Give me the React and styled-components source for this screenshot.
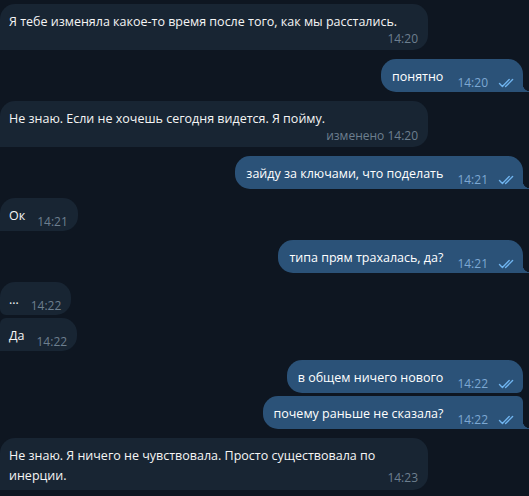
import React from 'react';
import styled, { createGlobalStyle, css } from 'styled-components';

const GlobalStyle = createGlobalStyle`
  html, body {
    margin: 0;
    padding: 0;
    background: #0e1621;
  }
  body {
    font-family: "Open Sans", "Noto Sans", sans-serif;
    -webkit-font-smoothing: antialiased;
  }
`;

const messages = [
  { id: 1, out: false, first: true, tail: true, layout: 'stacked', text: 'Я тебе изменяла какое-то время после того, как мы расстались.', time: '14:20' },
  { id: 2, out: true, first: true, tail: true, text: 'понятно', time: '14:20' },
  { id: 3, out: false, first: true, tail: true, layout: 'stacked', text: 'Не знаю. Если не хочешь сегодня видется. Я пойму.', time: '14:20', edited: true },
  { id: 4, out: true, first: true, tail: true, text: 'зайду за ключами, что поделать', time: '14:21' },
  { id: 5, out: false, first: true, tail: true, text: 'Ок', time: '14:21' },
  { id: 6, out: true, first: true, tail: true, text: 'типа прям трахалась, да?', time: '14:21' },
  { id: 7, out: false, first: true, tail: false, text: '…', time: '14:22' },
  { id: 8, out: false, first: false, tail: true, text: 'Да', time: '14:22' },
  { id: 9, out: true, first: true, tail: false, text: 'в общем ничего нового', time: '14:22' },
  { id: 10, out: true, first: false, tail: true, text: 'почему раньше не сказала?', time: '14:22' },
  { id: 11, out: false, first: true, tail: true, layout: 'tucked', text: 'Не знаю. Я ничего не чувствовала. Просто существовала по инерции.', time: '14:23' },
];

const Chat = styled.div`
  display: flex;
  flex-direction: column;
  width: 529px;
  height: 496px;
  overflow: hidden;
  box-sizing: border-box;
  padding-top: 4px;
  background: #0e1621;
`;

const Bubble = styled.div`
  position: relative;
  box-sizing: border-box;
  display: flex;
  flex-direction: ${p => (p.$layout === 'row' ? 'row' : 'column')};
  align-items: flex-start;
  margin-top: ${p => (p.$first ? '9px' : '3px')};
  padding: 8px 10px 1px 9px;
  border-radius: 15px;
  font-size: 12.5px;
  line-height: 20px;
  color: #f5f5f5;
  background: #182533;
  align-self: flex-start;

  &:first-child {
    margin-top: 0;
  }

  ${p => p.$layout === 'stacked' && css`
    width: 428px;
    padding-bottom: 3px;
  `}

  ${p => p.$layout === 'tucked' && css`
    display: flow-root;
    width: 428px;
    padding-bottom: 4px;
  `}

  ${p => !p.$out && css`
    ${!p.$first && 'border-top-left-radius: 6px;'}
    ${!p.$tail && 'border-bottom-left-radius: 6px;'}
    ${p.$tail && 'border-bottom-left-radius: 0;'}
  `}

  ${p => p.$out && css`
    align-self: flex-end;
    margin-right: 6px;
    padding-left: 11px;
    padding-right: 7px;
    color: #ffffff;
    background: #2b5278;
    ${!p.$first && 'border-top-right-radius: 6px;'}
    ${!p.$tail && 'border-bottom-right-radius: 6px;'}
    ${p.$tail && css`
      border-bottom-right-radius: 0;
      &::after {
        content: '';
        position: absolute;
        right: -7px;
        bottom: 0;
        width: 7px;
        height: 8px;
        background: radial-gradient(circle at 100% 0, transparent 7px, #2b5278 7.5px);
      }
    `}
  `}
`;

const Text = styled.span`
  white-space: pre-wrap;
  display: ${p => (p.$layout === 'tucked' ? 'inline' : 'block')};
`;

const Meta = styled.span`
  display: flex;
  align-items: center;
  flex-shrink: 0;
  font-size: 12px;
  line-height: 16px;
  white-space: nowrap;
  color: ${p => (p.$out ? '#7da8d3' : '#6d7f8f')};

  ${p => p.$layout === 'row' && css`
    margin-top: 8px;
    margin-left: ${p.$out ? '14px' : '12px'};
  `}
  ${p => p.$layout === 'stacked' && css`
    align-self: flex-end;
    margin-top: -1px;
  `}
  ${p => p.$layout === 'tucked' && css`
    float: right;
    margin-top: 4px;
    margin-left: 12px;
  `}
`;

const Checks = styled.svg`
  margin-left: 10px;
  width: 18px;
  height: 10px;
  color: #6fb3ee;
`;

const DoubleCheck = () => (
  <Checks viewBox="0 0 18 10" fill="none">
    <path
      d="M1.5 5.6 L4.4 8.5 L11.2 1.6 M7.6 8.5 L14.6 1.6"
      stroke="currentColor"
      strokeWidth="1.4"
      strokeLinecap="round"
      strokeLinejoin="round"
    />
  </Checks>
);

const Message = ({ msg }) => {
  const layout = msg.layout || 'row';
  return (
    <Bubble $out={msg.out} $first={msg.first} $tail={msg.tail} $layout={layout}>
      <Text $layout={layout}>{msg.text}</Text>
      <Meta $out={msg.out} $layout={layout}>
        {msg.edited ? `изменено ${msg.time}` : msg.time}
        {msg.out && <DoubleCheck />}
      </Meta>
    </Bubble>
  );
};

export default function App() {
  return (
    <>
      <GlobalStyle />
      <Chat>
        {messages.map(m => (
          <Message key={m.id} msg={m} />
        ))}
      </Chat>
    </>
  );
}
